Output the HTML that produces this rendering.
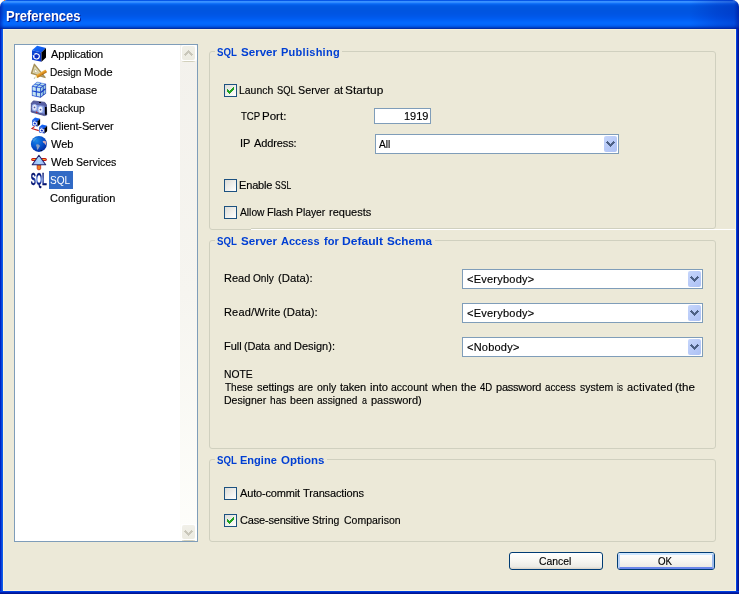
<!DOCTYPE html>
<html>
<head>
<meta charset="utf-8">
<title>Preferences</title>
<style>
html,body{margin:0;padding:0;}
body{width:739px;height:594px;overflow:hidden;background:#fff;position:relative;
  font-family:"Liberation Sans",sans-serif;font-size:11px;color:#000;}
.abs{position:absolute;}
#win{position:absolute;left:0;top:0;width:739px;height:594px;background:#ece9d8;
  border-radius:7px 7px 0 0;overflow:hidden;}
#title{position:absolute;left:0;top:0;width:739px;height:29px;
  background:linear-gradient(to bottom,#0656e8 0px,#0656e8 1px,#3a92ff 1px,#3a92ff 2px,#3089ff 2px,#3089ff 3px,#1171f8 3px,#1171f8 4px,#0663ee 4px,#0663ee 5px,#025be6 5px,#025be6 6px,#0058e2 6px,#0058e2 7px,#0057e1 7px,#0057e1 8px,#0056e0 8px,#0056e0 9px,#0056e0 9px,#0056e0 10px,#0055e0 10px,#0055e0 11px,#0055e1 11px,#0055e1 12px,#0055e2 12px,#0055e2 13px,#0055e3 13px,#0055e3 14px,#0056e5 14px,#0056e5 15px,#0057e7 15px,#0057e7 16px,#0058ea 16px,#0058ea 17px,#005aed 17px,#005aed 18px,#005cf0 18px,#005cf0 19px,#005ff4 19px,#005ff4 20px,#0162f8 20px,#0162f8 21px,#0265fb 21px,#0265fb 22px,#0368fd 22px,#0368fd 23px,#0368fd 23px,#0368fd 24px,#0365fa 24px,#0365fa 25px,#025ff2 25px,#025ff2 26px,#0054e2 26px,#0054e2 27px,#0043c8 27px,#0043c8 28px,#002fa8 28px,#002fa8 29px);}
#title .shade{position:absolute;right:0;top:0;width:50px;height:29px;
  background:linear-gradient(to right,rgba(0,30,170,0) 0%,rgba(0,30,170,.28) 55%,rgba(0,30,170,.40) 90%,rgba(0,20,150,.7) 100%);}
#title .shl{position:absolute;left:0;top:0;width:4px;height:29px;background:linear-gradient(to right,rgba(0,20,160,.6),rgba(0,20,160,0));}
.bl{position:absolute;left:0;top:29px;width:3px;height:565px;background:linear-gradient(to right,#0024c4 0,#0024c4 1px,#0844dc 1px,#0844dc 2px,#0f5ce8 2px);}
.br{position:absolute;left:736px;top:29px;width:3px;height:565px;background:linear-gradient(to right,#0040e0 0,#0040e0 1px,#0020b4 1px,#0020b4 2px,#001590 2px);}
.bb{position:absolute;left:0;top:591px;width:739px;height:3px;background:linear-gradient(to bottom,#0040e0 0,#0040e0 1px,#0020b4 1px,#0020b4 2px,#001590 2px);}
.cr{position:absolute;background:#fbf3d9;}
#tx{position:absolute;left:0;top:0;width:739px;height:594px;}
.k{filter:grayscale(1);-webkit-text-stroke:0.15px #000;}
.t{position:absolute;left:0;width:739px;white-space:pre;line-height:13px;height:13px;}
.t span{position:absolute;top:0;transform-origin:0 0;}
.b{font-weight:bold;color:#003fd0;filter:saturate(1.02);}
.w{color:#fff;filter:grayscale(1);}
.tt{filter:saturate(1.02);font-weight:bold;font-size:13.8px;line-height:16px;height:16px;color:#fff;text-shadow:1px 1px 0 #0a1883;}
/* list */
#list{position:absolute;left:14px;top:44px;width:182px;height:496px;border:1px solid #7f9db9;background:#fff;}
#track{position:absolute;left:180px;top:45px;width:17px;height:496px;background:linear-gradient(to bottom,#f3f1ec 0%,#f6f5f0 50%,#fefefb 100%);}
.sbtn{position:absolute;left:181px;width:16px;height:16px;border-radius:2px;background:#fff;}
.sbtn i{position:absolute;left:1px;top:1px;width:13px;height:14px;border-radius:2px;background:linear-gradient(to bottom,#f1f0e8,#ecebe1);}
.ssh{position:absolute;left:182px;width:13px;height:1px;background:linear-gradient(to right,#e6e4d6,#d2d0bc 20%,#d2d0bc 80%,#e6e4d6);}
.sel{position:absolute;left:49px;top:171px;width:24px;height:18px;background:#316ac5;}
/* group */
.grp{position:absolute;border:1px solid #d0d0bf;border-radius:3px;}
.gt{position:absolute;background:#ece9d8;height:13px;}
/* checkbox */
.cb{position:absolute;width:11px;height:11px;border:1px solid #1c5180;background:linear-gradient(135deg,#dcdcd7 0%,#efeeea 50%,#fff 100%);}
/* input */
.inp{position:absolute;border:1px solid #7f9db9;background:#fff;}
.dd{position:absolute;width:13px;height:16px;border-radius:2px;background:linear-gradient(135deg,#c6d6fb 0%,#b9cbf8 50%,#adc1f4 100%);}
/* buttons */
.btn{position:absolute;border:1px solid #003c74;border-radius:3px;background:linear-gradient(to bottom,#fff 0%,#f7f6f1 50%,#ecebe5 86%,#d6d0c5 100%);}
</style>
</head>
<body>
<div id="win">
  <div id="title"><div class="shade"></div><div class="shl"></div></div>
  <div class="bl"></div><div class="br"></div><div class="bb"></div>
  <div class="cr" style="left:735px;top:29px;width:1px;height:562px"></div>
  <div class="cr" style="left:3px;top:29px;width:1px;height:562px"></div>
  <div class="cr" style="left:3px;top:590px;width:733px;height:1px"></div>
  <div class="cr" style="left:3px;top:29px;width:733px;height:1px;background:#f6f0da"></div>

  <!-- list -->
  <div id="list"></div>
  <div id="track"></div>
  <div class="sbtn" style="top:45px"><i></i></div>
  <div class="sbtn" style="top:524px"><i></i></div>
  <div class="ssh" style="top:61px"></div><div class="ssh" style="top:540px"></div>
  <svg class="abs" style="left:184px;top:50px" width="9" height="6" viewBox="0 0 9 6" shape-rendering="crispEdges"><path d="M4 0h1v1h-1z M3 1h3v1h-3z M2 2h5v1h-5z M1 3h3v1h-3z M5 3h3v1h-3z M0 4h3v1h-3z M6 4h3v1h-3z M1 5h1v1h-1z M7 5h1v1h-1z" fill="#c9c7ba"/></svg>
  <svg class="abs" style="left:184px;top:530px" width="9" height="6" viewBox="0 0 9 6" shape-rendering="crispEdges"><path d="M1 0h1v1h-1z M7 0h1v1h-1z M0 1h3v1h-3z M6 1h3v1h-3z M1 2h3v1h-3z M5 2h3v1h-3z M2 3h5v1h-5z M3 4h3v1h-3z M4 5h1v1h-1z" fill="#c9c7ba"/></svg>
  <div class="sel"></div>
<svg class="abs" style="left:28px;top:44px" width="24" height="148" viewBox="28 44 24 148">
<defs>
<linearGradient id="gTop" x1="0" y1="0" x2="1" y2="1"><stop offset="0" stop-color="#1a74ff"/><stop offset="1" stop-color="#0a4ae0"/></linearGradient>
<linearGradient id="gFront" x1="0" y1="0" x2="1" y2="1"><stop offset="0" stop-color="#0c4ad8"/><stop offset="1" stop-color="#0a30c4"/></linearGradient>
<radialGradient id="gGlobe" cx="0.35" cy="0.3" r="0.75"><stop offset="0" stop-color="#1a88e8"/><stop offset="0.5" stop-color="#0858d0"/><stop offset="1" stop-color="#0428a0"/></radialGradient>
<linearGradient id="gTri" x1="0" y1="0" x2="1" y2="0"><stop offset="0" stop-color="#9ca4f0"/><stop offset="0.5" stop-color="#a8d8ff"/><stop offset="1" stop-color="#9ca4f0"/></linearGradient>
<radialGradient id="gSql" cx="0.5" cy="0.5" r="0.62" gradientTransform="translate(0.5 0.5) scale(1.25 0.8) translate(-0.5 -0.5)"><stop offset="0" stop-color="#c4d8ff"/><stop offset="0.16" stop-color="#5a84e0"/><stop offset="0.42" stop-color="#08208a"/><stop offset="1" stop-color="#000850"/></radialGradient>
<linearGradient id="gPen" x1="0" y1="0" x2="0" y2="1"><stop offset="0" stop-color="#f4b648"/><stop offset="0.5" stop-color="#dc9020"/><stop offset="1" stop-color="#b06c10"/></linearGradient>
</defs>
<polygon points="32.0,50.2 37.1,45.8 46.0,48.0 41.5,52.4" fill="url(#gTop)"/>
<polygon points="32.0,50.2 41.5,52.4 41.5,61.8 32.0,59.8" fill="url(#gFront)"/>
<polygon points="41.5,52.4 46.0,48.0 46.0,57.5 41.5,61.8" fill="#000"/>
<ellipse cx="36.5" cy="56.3" rx="2.85" ry="2.65" fill="#0a2cc4" stroke="#fff" stroke-width="1.1" stroke-dasharray="8.4 1.6 7.6 0" transform="rotate(8 36.5 56.3)"/>
<polygon points="32.6,55.0 35.1,55.7 33.4,57.3" fill="#fff"/>
<polygon points="34.4,64.4 31.5,73.3 45.0,77.4" fill="#dedab4" stroke="#a8925a" stroke-width="1.5" stroke-linejoin="round"/>
<polygon points="35.0,69.0 34.2,72.0 38.6,73.3" fill="#fff" stroke="#b8a870" stroke-width="0.6"/>
<circle cx="42.5" cy="74.5" r="0.7" fill="#000"/>
<g transform="translate(35.2,77.6) rotate(-31)"><rect x="1.6" y="-1.6" width="11.4" height="3.2" fill="url(#gPen)" rx="0.6"/><polygon points="1.8,-1.5 1.8,1.5 -0.6,0.4 -0.6,-0.4" fill="#f0f0c4"/><polygon points="-0.4,-0.5 -0.4,0.5 -1.8,0" fill="#505860"/></g>
<polygon points="32.0,86.2 37.1,81.9 45.8,84.0 40.6,87.5" fill="#2050d8" stroke="#2050d8" stroke-width="0.3" stroke-linejoin="round"/>
<polygon points="32.0,86.2 40.6,87.5 40.6,97.5 32.0,95.7" fill="#1844d0" stroke="#1844d0" stroke-width="0.3" stroke-linejoin="round"/>
<polygon points="40.6,87.5 45.8,84.0 45.8,93.5 40.6,97.5" fill="#1438c0" stroke="#0c2498" stroke-width="0.3" stroke-linejoin="round"/>
<polygon points="32.9,86.0 34.8,84.4 38.0,85.0 36.1,86.5" fill="#b4dcec"/>
<polygon points="37.2,86.7 39.1,85.3 42.3,85.9 40.4,87.2" fill="#b4dcec"/>
<polygon points="35.4,83.9 37.3,82.3 40.6,83.1 38.6,84.5" fill="#b4dcec"/>
<polygon points="39.8,84.8 41.7,83.3 44.9,84.1 43.0,85.4" fill="#b4dcec"/>
<polygon points="32.5,86.8 35.8,87.4 35.8,91.0 32.5,90.5" fill="#c4e4f0"/>
<polygon points="32.5,91.6 35.8,92.2 35.8,95.9 32.5,95.2" fill="#c4e4f0"/>
<polygon points="36.8,87.5 40.1,88.0 40.1,91.8 36.8,91.2" fill="#c4e4f0"/>
<polygon points="36.8,92.4 40.1,93.0 40.1,96.8 36.8,96.1" fill="#c4e4f0"/>
<polygon points="41.0,88.0 42.8,86.8 42.8,90.1 41.0,91.4" fill="#a0d0e4"/>
<polygon points="41.0,93.0 42.8,91.7 42.8,95.0 41.0,96.4" fill="#a0d0e4"/>
<polygon points="43.6,86.2 45.4,85.0 45.4,88.3 43.6,89.5" fill="#a0d0e4"/>
<polygon points="43.6,91.1 45.4,89.8 45.4,93.1 43.6,94.4" fill="#a0d0e4"/>
<polygon points="31.4,103.2 33.4,100.9 44.8,102.4 46.4,104.8 46.7,115.0 44.4,115.6 31.2,112.0" fill="#5860a4" stroke="#3c4484" stroke-width="0.8" stroke-linejoin="round"/>
<polygon points="32.2,104.4 44.4,105.8 44.4,113.8 32.2,110.8" fill="#8098dc"/>
<polygon points="45.0,107.0 46.7,107.0 46.8,114.6 45.0,114.8" fill="#000"/>
<rect x="39" y="102" width="2" height="0.9" fill="#000"/>
<ellipse cx="34.6" cy="107.4" rx="2.3" ry="3.0" fill="#f0f0f8" stroke="#a4bcf4" stroke-width="0.9"/><circle cx="34.5" cy="107.4" r="0.9" fill="#5058a8"/>
<ellipse cx="40.5" cy="109.4" rx="2.4" ry="3.1" fill="#fbfbff" stroke="#a4bcf4" stroke-width="0.9"/><circle cx="40.5" cy="109.7" r="0.9" fill="#5058a8"/>
<polygon points="36.0,111.2 38.0,112.6 36.2,113.0" fill="#d01818"/>
<path d="M34.6,126.4 L32.0,128.6 L38.8,130.6" fill="none" stroke="#c02222" stroke-width="1.1"/>
<polygon points="32.2,120.1 35.1,117.6 40.1,118.8 37.6,121.3" fill="url(#gTop)"/>
<polygon points="32.2,120.1 37.6,121.3 37.6,126.6 32.2,125.4" fill="url(#gFront)"/>
<polygon points="37.6,121.3 40.1,118.8 40.1,124.2 37.6,126.6" fill="#000"/>
<ellipse cx="34.8" cy="123.5" rx="1.68" ry="1.60" fill="#1030c8" stroke="#fff" stroke-width="1.0" transform="rotate(10 34.8 123.5)"/>
<polygon points="39.2,127.1 42.1,124.6 47.1,125.8 44.6,128.3" fill="url(#gTop)"/>
<polygon points="39.2,127.1 44.6,128.3 44.6,133.6 39.2,132.4" fill="url(#gFront)"/>
<polygon points="44.6,128.3 47.1,125.8 47.1,131.2 44.6,133.6" fill="#000"/>
<ellipse cx="41.8" cy="130.5" rx="1.68" ry="1.60" fill="#1030c8" stroke="#fff" stroke-width="1.0" transform="rotate(10 41.8 130.5)"/>
<circle cx="38.9" cy="143.9" r="8" fill="url(#gGlobe)"/>
<path d="M33.0,139.6 Q34.4,137.6 37.0,137.8 Q36.4,139.6 35.0,140.6 Q34.0,142.4 33.2,141.4 Z" fill="#4c9ce0" opacity="0.8"/>
<path d="M36.2,144.6 Q38.0,143.8 39.6,145.2 Q40.4,146.0 39.2,147.2 Q38.2,149.4 37.4,150.0 Q36.6,148.6 36.8,147.2 Q35.8,145.8 36.2,144.6 Z" fill="#8ca0c4"/>
<path d="M42.6,141.2 Q44.2,140.2 45.8,141.2 Q46.4,143.0 46.2,145.6 Q45.4,144.4 44.6,143.4 Q43.0,143.2 42.6,141.2 Z" fill="#cfa8b4"/>
<rect x="40.6" y="150" width="1.2" height="0.9" fill="#000"/>
<rect x="31.2" y="158" width="15.6" height="3" rx="1.5" fill="#c01414"/><rect x="32.4" y="159" width="13.2" height="1" fill="#ffa420"/>
<path d="M37.2,165 L37.2,168.4 Q37.2,169.8 38.9,169.8 Q40.7,169.8 40.7,168.4 L40.7,165 Z" fill="#f08420" stroke="#c82410" stroke-width="0.8"/>
<polygon points="38.9,155.3 45.7,164.7 32.2,164.7" fill="url(#gTri)" stroke="#20246c" stroke-width="1.1" stroke-linejoin="round"/>
<text style="filter:saturate(1.02)" x="30.8" y="185" font-family="Liberation Sans, sans-serif" font-size="16.6" font-weight="bold" textLength="16.0" lengthAdjust="spacingAndGlyphs" fill="url(#gSql)" stroke="url(#gSql)" stroke-width="0.35">SQL</text>
</svg>

  <!-- group 1 -->
  <div class="grp" style="left:209px;top:51px;width:505px;height:177px;clip-path:inset(0 465px 0 0)"></div>
  <div class="grp" style="left:209px;top:51px;width:505px;height:176px;clip-path:inset(0 0 0 42px)"></div>
  <div class="gt" style="left:215px;top:46px;width:127px"></div>
  <div class="cb" style="left:224px;top:84px"></div>
  <svg class="abs" style="left:227px;top:87px" width="7" height="7" viewBox="0 0 7 7" shape-rendering="crispEdges"><path d="M0 2h1v3h-1z M1 3h1v3h-1z M2 4h1v3h-1z M3 3h1v3h-1z M4 2h1v3h-1z M5 1h1v3h-1z M6 0h1v3h-1z" fill="#21a121"/></svg>
  <div class="inp" style="left:374px;top:108px;width:55px;height:14px"></div>
  <div class="inp" style="left:375px;top:134px;width:242px;height:18px"></div>
  <div class="dd" style="left:604px;top:136px"></div>
  <svg class="abs" style="left:606px;top:141px" width="9" height="6" viewBox="0 0 9 6" shape-rendering="crispEdges"><path d="M1 0h1v1h-1z M7 0h1v1h-1z M0 1h3v1h-3z M6 1h3v1h-3z M1 2h3v1h-3z M5 2h3v1h-3z M2 3h5v1h-5z M3 4h3v1h-3z M4 5h1v1h-1z" fill="#4d6185"/></svg>
  <div class="cb" style="left:224px;top:179px"></div>
  <div class="cb" style="left:224px;top:206px"></div>
  <div class="abs" style="left:251px;top:229px;width:484px;height:1px;background:#fff"></div>

  <!-- group 2 -->
  <div class="grp" style="left:209px;top:240px;width:505px;height:207px"></div>
  <div class="gt" style="left:215px;top:235px;width:220px"></div>
  <div class="inp" style="left:462px;top:269px;width:239px;height:18px"></div>
  <div class="dd" style="left:688px;top:271px"></div>
  <svg class="abs" style="left:690px;top:276px" width="9" height="6" viewBox="0 0 9 6" shape-rendering="crispEdges"><path d="M1 0h1v1h-1z M7 0h1v1h-1z M0 1h3v1h-3z M6 1h3v1h-3z M1 2h3v1h-3z M5 2h3v1h-3z M2 3h5v1h-5z M3 4h3v1h-3z M4 5h1v1h-1z" fill="#4d6185"/></svg>
  <div class="inp" style="left:462px;top:303px;width:239px;height:18px"></div>
  <div class="dd" style="left:688px;top:305px"></div>
  <svg class="abs" style="left:690px;top:310px" width="9" height="6" viewBox="0 0 9 6" shape-rendering="crispEdges"><path d="M1 0h1v1h-1z M7 0h1v1h-1z M0 1h3v1h-3z M6 1h3v1h-3z M1 2h3v1h-3z M5 2h3v1h-3z M2 3h5v1h-5z M3 4h3v1h-3z M4 5h1v1h-1z" fill="#4d6185"/></svg>
  <div class="inp" style="left:462px;top:337px;width:239px;height:18px"></div>
  <div class="dd" style="left:688px;top:339px"></div>
  <svg class="abs" style="left:690px;top:344px" width="9" height="6" viewBox="0 0 9 6" shape-rendering="crispEdges"><path d="M1 0h1v1h-1z M7 0h1v1h-1z M0 1h3v1h-3z M6 1h3v1h-3z M1 2h3v1h-3z M5 2h3v1h-3z M2 3h5v1h-5z M3 4h3v1h-3z M4 5h1v1h-1z" fill="#4d6185"/></svg>

  <!-- group 3 -->
  <div class="grp" style="left:209px;top:459px;width:505px;height:81px"></div>
  <div class="gt" style="left:215px;top:454px;width:112px"></div>
  <div class="cb" style="left:224px;top:487px"></div>
  <div class="cb" style="left:224px;top:514px"></div>
  <svg class="abs" style="left:227px;top:517px" width="7" height="7" viewBox="0 0 7 7" shape-rendering="crispEdges"><path d="M0 2h1v3h-1z M1 3h1v3h-1z M2 4h1v3h-1z M3 3h1v3h-1z M4 2h1v3h-1z M5 1h1v3h-1z M6 0h1v3h-1z" fill="#21a121"/></svg>

  <!-- buttons -->
  <div class="btn" style="left:509px;top:552px;width:92px;height:16px"></div>
  <div class="btn" style="left:617px;top:552px;width:96px;height:16px"><div style="position:absolute;left:0;top:0;width:92px;height:12px;border-style:solid;border-width:2px;border-color:#cee7ff #9dbbec #6a86ea #bcd4f6;border-radius:2px"></div></div>

<div id="tx">
  <div class="t tt" style="top:9px"><span style="left:6px;transform:scaleX(0.944)">Preferences</span></div>
  <div class="t k" style="top:48px"><span style="left:51px;letter-spacing:-0.16px">Application</span></div>
  <div class="t k" style="top:66px"><span style="left:50px;transform:scaleX(0.917)">Design</span> <span style="left:84px;transform:scaleX(1.043)">Mode</span></div>
  <div class="t k" style="top:84px"><span style="left:50px">Database</span></div>
  <div class="t k" style="top:102px"><span style="left:50px;transform:scaleX(0.949)">Backup</span></div>
  <div class="t k" style="top:120px"><span style="left:51px;letter-spacing:-0.13px">Client-Server</span></div>
  <div class="t k" style="top:138px"><span style="left:51px">Web</span></div>
  <div class="t k" style="top:156px"><span style="left:51px">Web</span> <span style="left:76px;transform:scaleX(0.957)">Services</span></div>
  <div class="t w" style="top:174px"><span style="left:50px;transform:scaleX(0.917)">SQL</span></div>
  <div class="t k" style="top:192px"><span style="left:50px">Configuration</span></div>
  <div class="t b" style="top:46px"><span style="left:217px;transform:scaleX(0.879)">SQL</span> <span style="left:241px;transform:scaleX(1.053)">Server</span> <span style="left:281px;letter-spacing:0.27px">Publishing</span></div>
  <div class="t k" style="top:84px"><span style="left:239px;transform:scaleX(0.948)">Launch</span> <span style="left:277px;transform:scaleX(0.851)">SQL</span> <span style="left:298px;transform:scaleX(0.978)">Server</span> <span style="left:334px">at</span> <span style="left:345px;transform:scaleX(1.079)">Startup</span></div>
  <div class="t k" style="top:110px"><span style="left:241px;transform:scaleX(0.873)">TCP</span> <span style="left:262px;transform:scaleX(1.049)">Port:</span></div>
  <div class="t k" style="top:110px"><span style="left:404px">1919</span></div>
  <div class="t k" style="top:137px"><span style="left:240px">IP</span> <span style="left:254px;letter-spacing:-0.11px">Address:</span></div>
  <div class="t k" style="top:138px"><span style="left:379px;transform:scaleX(0.925)">All</span></div>
  <div class="t k" style="top:179px"><span style="left:239px;letter-spacing:-0.16px">Enable</span> <span style="left:275px;transform:scaleX(0.777)">SSL</span></div>
  <div class="t k" style="top:206px"><span style="left:240px;transform:scaleX(0.932)">Allow</span> <span style="left:267px;letter-spacing:-0.20px">Flash</span> <span style="left:296px;transform:scaleX(0.939)">Player</span> <span style="left:329px">requests</span></div>
  <div class="t b" style="top:235px"><span style="left:217px;transform:scaleX(0.879)">SQL</span> <span style="left:241px;transform:scaleX(1.053)">Server</span> <span style="left:281px">Access</span> <span style="left:324px">for</span> <span style="left:342px;transform:scaleX(1.100)">Default</span> <span style="left:387px;transform:scaleX(1.064)">Schema</span></div>
  <div class="t k" style="top:272px"><span style="left:224px">Read</span> <span style="left:253px;transform:scaleX(0.920)">Only</span> <span style="left:278px;transform:scaleX(1.029)">(Data):</span></div>
  <div class="t k" style="top:306px"><span style="left:224px;letter-spacing:0.18px">Read/Write</span> <span style="left:283px;transform:scaleX(1.029)">(Data):</span></div>
  <div class="t k" style="top:340px"><span style="left:224px">Full</span> <span style="left:244px;letter-spacing:-0.20px">(Data</span> <span style="left:274px;transform:scaleX(0.950)">and</span> <span style="left:294px">Design):</span></div>
  <div class="t k" style="top:273px"><span style="left:467px;letter-spacing:0.24px">&lt;Everybody&gt;</span></div>
  <div class="t k" style="top:307px"><span style="left:467px;letter-spacing:0.24px">&lt;Everybody&gt;</span></div>
  <div class="t k" style="top:341px"><span style="left:467px;letter-spacing:0.23px">&lt;Nobody&gt;</span></div>
  <div class="t k" style="top:368px"><span style="left:224px;transform:scaleX(0.938)">NOTE</span></div>
  <div class="t k" style="top:381px"><span style="left:225px;transform:scaleX(0.911)">These</span> <span style="left:257px;letter-spacing:-0.11px">settings</span> <span style="left:298px;transform:scaleX(0.944)">are</span> <span style="left:317px;transform:scaleX(0.955)">only</span> <span style="left:340px;letter-spacing:-0.20px">taken</span> <span style="left:370px;transform:scaleX(1.016)">into</span> <span style="left:391px;transform:scaleX(0.954)">account</span> <span style="left:432px;transform:scaleX(0.965)">when</span> <span style="left:461px">the</span> <span style="left:480px;transform:scaleX(0.871)">4D</span> <span style="left:496px;letter-spacing:-0.23px">password</span> <span style="left:545px;transform:scaleX(0.893)">access</span> <span style="left:580px;transform:scaleX(0.953)">system</span> <span style="left:617px;transform:scaleX(0.759)">is</span> <span style="left:627px;letter-spacing:0.20px">activated</span> <span style="left:675px;transform:scaleX(1.055)">(the</span></div>
  <div class="t k" style="top:394px"><span style="left:224px;transform:scaleX(0.958)">Designer</span> <span style="left:270px;transform:scaleX(0.920)">has</span> <span style="left:290px;transform:scaleX(0.964)">been</span> <span style="left:317px;transform:scaleX(0.917)">assigned</span> <span style="left:362px;transform:scaleX(0.812)">a</span> <span style="left:371px">password)</span></div>
  <div class="t b" style="top:454px"><span style="left:217px;transform:scaleX(0.879)">SQL</span> <span style="left:240px;transform:scaleX(1.004)">Engine</span> <span style="left:281px;transform:scaleX(1.044)">Options</span></div>
  <div class="t k" style="top:487px"><span style="left:240px;letter-spacing:-0.16px">Auto-commit</span> <span style="left:303px;letter-spacing:-0.15px">Transactions</span></div>
  <div class="t k" style="top:514px"><span style="left:240px;letter-spacing:-0.19px">Case-sensitive</span> <span style="left:312px;transform:scaleX(0.949)">String</span> <span style="left:344px;transform:scaleX(0.954)">Comparison</span></div>
  <div class="t k" style="top:555px"><span style="left:539px;transform:scaleX(0.946)">Cancel</span></div>
  <div class="t k" style="top:555px"><span style="left:658px;transform:scaleX(0.884)">OK</span></div>
</div>
</div>
<div class="abs" style="left:4px;top:0;width:1px;height:1px;background:#f08030"></div>
</body>
</html>
